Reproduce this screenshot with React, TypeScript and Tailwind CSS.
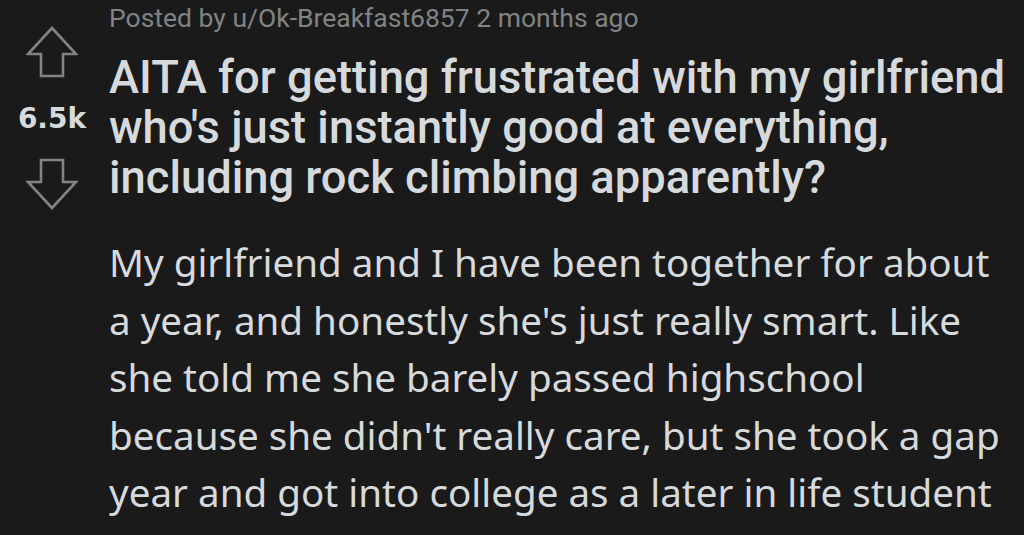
const ArrowUp = () => (
  <svg width="52" height="52" viewBox="0 0 52 52" fill="none">
    <path
      d="M26 2 L50 28 L37 28 L37 50 L15 50 L15 28 L2 28 Z"
      stroke="#818384"
      strokeWidth="2.6"
      strokeLinejoin="miter"
    />
  </svg>
);

const ArrowDown = () => (
  <svg width="52" height="52" viewBox="0 0 52 52" fill="none">
    <path
      d="M26 50 L50 24 L37 24 L37 2 L15 2 L15 24 L2 24 Z"
      stroke="#818384"
      strokeWidth="2.6"
      strokeLinejoin="miter"
    />
  </svg>
);

export default function App() {
  return (
    <div className="w-[1024px] h-[535px] overflow-hidden bg-[#1a1a1b] flex">
      {/* Vote column */}
      <div className="w-[104px] shrink-0 flex flex-col items-center pt-[26px]">
        <ArrowUp />
        <span className="mt-[26px] text-[28px] leading-[30px] font-bold text-[#d7dadc] font-['DejaVu_Sans',sans-serif]">
          6.5k
        </span>
        <div className="mt-[24px]">
          <ArrowDown />
        </div>
      </div>

      {/* Post */}
      <div className="flex-1 pl-[5px]">
        <p className="pt-[1px] text-[26.5px] leading-[34px] text-[#818384] font-['Roboto',sans-serif]">
          Posted by u/Ok-Breakfast6857 2 months ago
        </p>
        <h1 className="mt-[18px] text-[45.3px] leading-[50px] font-medium text-[#d7dadc] font-['Roboto',sans-serif]">
          AITA for getting frustrated with my girlfriend
          <br />
          who's just instantly good at everything,
          <br />
          including rock climbing apparently?
        </h1>
        <p className="mt-[31px] text-[38.6px] leading-[57.5px] text-[#d7dadc] font-['Noto_Sans',sans-serif]">
          My girlfriend and I have been together for about
          <br />
          a year, and honestly she's just really smart. Like
          <br />
          she told me she barely passed highschool
          <br />
          because she didn't really care, but she took a gap
          <br />
          year and got into college as a later in life student
        </p>
      </div>
    </div>
  );
}
